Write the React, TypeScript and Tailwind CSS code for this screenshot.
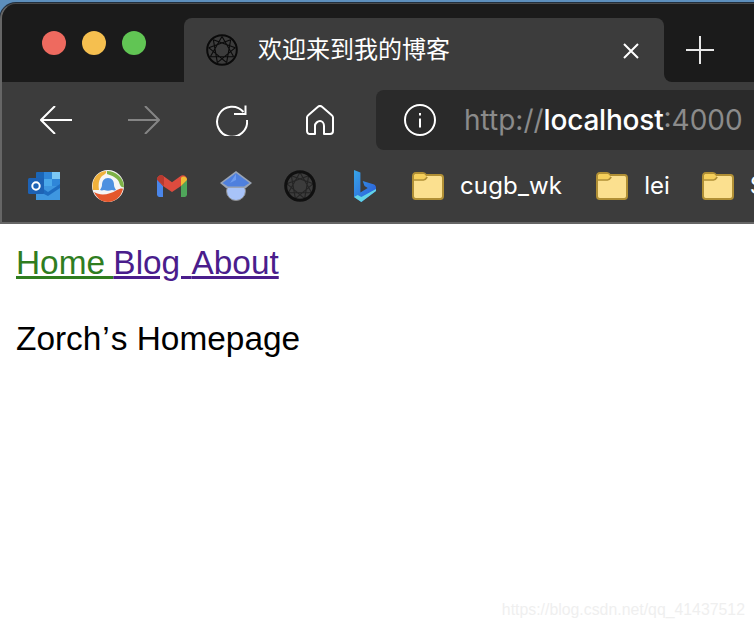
import React from "react";

const ui = "font-['Inter','Noto_Sans_CJK_SC',sans-serif]";
const page = "font-['Liberation_Sans','Noto_Sans_CJK_SC',sans-serif]";

function Enneagram({ stroke, ring = 2, starOpacity = 1 }: { stroke: string; ring?: number; starOpacity?: number }) {
  const pts = Array.from({ length: 9 }, (_, i) => {
    const a = (i * 40 - 90) * (Math.PI / 180);
    return [16 + 13.5 * Math.cos(a), 16 + 13.5 * Math.sin(a)];
  });
  const d = pts
    .map((_, i) => {
      const p = pts[i];
      const q = pts[(i + 3) % 9];
      return `M${p[0].toFixed(2)} ${p[1].toFixed(2)}L${q[0].toFixed(2)} ${q[1].toFixed(2)}`;
    })
    .join("");
  return (
    <svg className="shrink-0" width="32" height="32" viewBox="0 0 32 32" fill="none" stroke={stroke}>
      <circle cx="16" cy="16" r={16 - ring / 2 - 0.2} strokeWidth={ring} />
      <path d={d} strokeWidth="1.1" opacity={starOpacity} />
    </svg>
  );
}

function Folder() {
  return (
    <svg className="shrink-0" width="32" height="28" viewBox="0 0 32 28">
      <path d="M1 4.500C1 2.500 2.200 1 4 1h7c1.400 0 2.200.6 3 2h14.500C30 3 31 4 31 5.800v18.500c0 1.700-1 2.700-2.700 2.700H3.700C2 27 1 26 1 24.300z" fill="#fbe08f" stroke="#b08f35" strokeWidth="2" />
      <path d="M2 7.500V4.500C2 3 3 2 4 2h7c1.200 0 1.800.5 2.600 1.600L15 5c-1 1.600-2 2.500-3.500 2.500z" fill="#f5cf5b" />
      <path d="M2 8h9.500c1.700 0 2.700-1.400 3.700-3" fill="none" stroke="#b08f35" strokeWidth="1.600" />
    </svg>
  );
}

export default function App() {
  return (
    <div className={`w-[754px] h-[628px] overflow-hidden bg-white flex flex-col ${page}`}>
      <div className={`h-[224px] shrink-0 bg-[#5d8fbd] pt-[3px] flex flex-col ${ui}`}>
        <div className="flex-1 rounded-tl-[16px] overflow-hidden bg-[#3c3c3c] border-l-2 border-t border-b-2 border-l-[#666666] border-t-[#4a4a4a] border-b-[#666666] shadow-[0_0_0_1px_#22303f] flex flex-col">
          {/* tab strip */}
          <div className="h-[78px] shrink-0 flex bg-[#1b1b1b]">
            <div className="w-[182px] shrink-0 pl-[40px] pt-[27px] flex gap-[16px]">
              <div className="w-6 h-6 rounded-full bg-[#ee6a5f]" />
              <div className="w-6 h-6 rounded-full bg-[#f5bf4f]" />
              <div className="w-6 h-6 rounded-full bg-[#61c554]" />
            </div>
            <div className="w-[480px] shrink-0 flex flex-col">
              <div className="h-[14px] shrink-0" />
              <div className="flex-1 rounded-t-lg bg-[#3c3c3c] flex items-center pl-[22px] pr-[23px]">
                <Enneagram stroke="#0a0a0a" />
                <span className={`ml-[20px] text-[24px] text-white leading-none ${page}`}>欢迎来到我的博客</span>
                <svg className="ml-auto mt-[2px]" width="20" height="20" viewBox="0 0 20 20" stroke="#fff" strokeWidth="2" fill="none">
                  <path d="M3 3l14 14M17 3L3 17" />
                </svg>
              </div>
            </div>
            <div className="flex-1 bg-[#3c3c3c]">
              <div className="w-full h-full bg-[#1b1b1b] rounded-bl-lg flex items-center pl-[22px] pt-[14px]">
                <svg width="28" height="28" viewBox="0 0 28 28" stroke="#e8e8e8" strokeWidth="2" fill="none">
                  <path d="M0 14h28M14 0v28" />
                </svg>
              </div>
            </div>
          </div>
          {/* toolbar */}
          <div className="h-[68px] shrink-0 flex items-center pt-[8px]">
            <svg className="ml-[38px] shrink-0" width="32" height="28" viewBox="0 0 32 28" stroke="#fff" strokeWidth="2" fill="none">
              <path d="M32 14H1M15 0L1 14l14 14" />
            </svg>
            <svg className="ml-[56px] shrink-0" width="32" height="28" viewBox="0 0 32 28" stroke="#858585" strokeWidth="2" fill="none">
              <path d="M0 14h31M17 0l14 14-14 14" />
            </svg>
            <svg className="ml-[56px] shrink-0" width="32" height="32" viewBox="0 0 32 32" stroke="#fff" strokeWidth="2" fill="none">
              <path d="M27.500 8A15 15 0 1 0 31 16" />
              <path d="M18 10h11.500V1.500" />
            </svg>
            <svg className="ml-[58px] shrink-0" width="28" height="30" viewBox="0 0 28 30" stroke="#fff" strokeWidth="2" fill="none" strokeLinejoin="round">
              <path d="M1 12.500c0-1 .4-1.700 1.200-2.300L12 1.800c1.200-1 2.800-1 4 0l9.800 8.400c.8.6 1.200 1.300 1.200 2.300V26c0 1.800-1.200 3-3 3h-6v-8c0-3-2-5-4-5s-5 2-5 5v8H4c-1.800 0-3-1.200-3-3z" />
            </svg>
            <div className="ml-[42px] flex-1 h-[60px] rounded-l-lg bg-[#2a2a2a] flex items-center pl-[28px] whitespace-nowrap">
              <svg className="shrink-0" width="32" height="32" viewBox="0 0 32 32" stroke="#fff" strokeWidth="2" fill="none">
                <circle cx="16" cy="16" r="15" />
                <path d="M16 14.500v9M16 9v2.500" />
              </svg>
              <span className="ml-[28px] text-[28px] leading-none text-[#8b8b8b]">
                http://<span className="text-white font-medium tracking-[-0.2px]">localhost</span>:4000
              </span>
            </div>
          </div>
          {/* bookmarks */}
          <div className="flex-1 flex items-center whitespace-nowrap text-white text-[24px]">
            <svg className="ml-[26px] shrink-0" width="32" height="28" viewBox="0 0 32 28">
              <rect x="8" y="0" width="24" height="14" rx="1" fill="#1a66b8" />
              <rect x="24" y="0" width="8" height="7" fill="#7cc8f5" />
              <rect x="16" y="0" width="8" height="7" fill="#2f86d8" />
              <rect x="16" y="7" width="8" height="7" fill="#4aa8ea" />
              <rect x="24" y="7" width="8" height="7" fill="#2f86d8" />
              <rect x="8" y="14" width="24" height="14" fill="#3f97e0" />
              <path d="M8 12l12 8 12-8v4l-12 8L8 18z" fill="#1e6cc0" />
              <rect x="0" y="6" width="16" height="16" rx="1.500" fill="#1d62b5" />
              <circle cx="8" cy="14" r="3.700" fill="none" stroke="#fff" strokeWidth="2" />
            </svg>
            <svg className="ml-[32px] shrink-0" width="32" height="32" viewBox="0 0 32 32">
              <circle cx="16" cy="16" r="16" fill="#f5f5f5" />
              <path d="M1 20C-1 10 5 2 14 1c1 2-1 3-4 5C7 9 6 14 7 20z" fill="#efb13d" />
              <path d="M15 1c9 0 17 7 17 16-3 1-4-2-5-5-2-4-6-6-12-8z" fill="#7db246" />
              <path d="M2 22c6 4 15 3 23-2 2-1 5-2 6-1-2 8-8 13-15 13S5 28 2 22z" fill="#e4572c" />
              <path d="M16 8c4 0 6 3 6 7 0 2 1 3 2 5-2 1-3 0-4 0-3 1-5 1-8 0-1 0-2 1-4 0 1-2 2-3 2-5 0-4 2-7 6-7z" fill="#4d90e0" />
            </svg>
            <svg className="ml-[33px] shrink-0" width="30" height="22" viewBox="0 0 30 24" preserveAspectRatio="none">
              <path d="M0 5v16c0 1.500 1 3 2.500 3H6V12z" fill="#4a86ea" />
              <path d="M24 12v12h3.500c1.500 0 2.500-1.500 2.500-3V5z" fill="#4fa65a" />
              <path d="M0 5c0-4 4-6 7-3.500L15 8l8-6.500C26-1 30 1 30 5l-6 7-9 6.500L6 12z" fill="#dd4b3e" />
              <path d="M24 3c2-2.500 6-1.500 6 2.500L24 12z" fill="#eebb35" />
              <path d="M0 5c0-4 4-6 7-3.500V12z" fill="#b83a2f" />
            </svg>
            <svg className="ml-[33px] shrink-0" width="32" height="30" viewBox="0 0 32 30">
              <circle cx="16" cy="20" r="9.500" fill="#a8c3f8" stroke="#8c8c8c" />
              <path d="M16 0L32 12l-6 5H6l-6-5z" fill="#9aa4b5" />
              <path d="M16 2L29.500 12 24 15.500H8L2.500 12z" fill="#4f80de" />
              <path d="M16 3v6l-6 3z" fill="#6f9cf0" />
            </svg>
            <div className="ml-[32px] flex shrink-0">
              <Enneagram stroke="#101010" ring={3} starOpacity={0.55} />
            </div>
            <svg className="ml-[38px] shrink-0" width="22" height="32" viewBox="0 0 24 32" preserveAspectRatio="none">
              <defs>
                <linearGradient id="bg" x1="0" y1="0" x2="1" y2="1">
                  <stop offset="0" stopColor="#37a6e8" />
                  <stop offset="1" stopColor="#2a55d8" />
                </linearGradient>
              </defs>
              <path d="M0 0l7 2.500v20l8-4.500-3.500-2-2-5L22 14.500c1.500 1 2 2 2 3.500v3L8 32l-8-5z" fill="url(#bg)" />
              <path d="M0 27l8 5 16-11v-2L8 27 4 25z" fill="#62d3e6" />
            </svg>
            <div className="ml-[36px] flex items-center shrink-0">
              <Folder />
              <span className="ml-[16px] tracking-[0.15px]">cugb_wk</span>
            </div>
            <div className="ml-[34px] flex items-center shrink-0">
              <Folder />
              <span className="ml-[16px]">lei</span>
            </div>
            <div className="ml-[32px] flex items-center shrink-0">
              <Folder />
              <span className="ml-[16px]">S</span>
            </div>
          </div>
        </div>
      </div>
      {/* page */}
      <div className="flex-1 relative bg-white px-4 pt-[18px] text-[33.4px] leading-[42px] text-black">
        <p className="whitespace-nowrap">
          <a href="#home" className="text-[#2f7d1f] underline [word-spacing:-1px]">Home </a>
          <a href="#blog" className="text-[#4a1d8c] underline [word-spacing:2px]">Blog </a>
          <a href="#about" className="text-[#4a1d8c] underline">About</a>
        </p>
        <p className="mt-[34px] whitespace-nowrap">
          Zorch<span className="mx-[1px]">’</span>s Homepage
        </p>
        <span className="absolute right-[9px] bottom-[10px] text-[15.850px] leading-none text-[#efefef]">https://blog.csdn.net/qq_41437512</span>
      </div>
    </div>
  );
}
